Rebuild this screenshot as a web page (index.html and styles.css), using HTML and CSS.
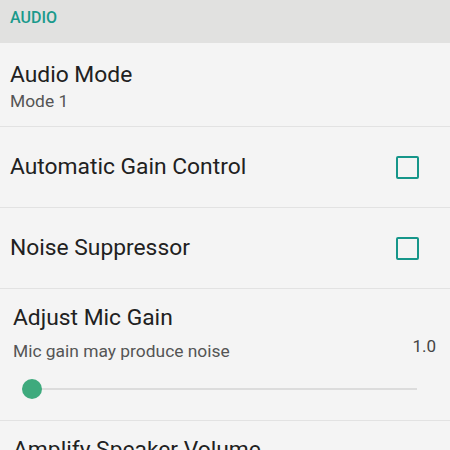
FILE: index.html
```html
<!DOCTYPE html>
<html lang="en">
<head>
    <meta charset="UTF-8">
    <meta name="viewport" content="width=device-width, initial-scale=1.0">
    <title>Audio Settings</title>
    <link rel="stylesheet" href="styles.css">
</head>
<body>

    <div class="category">AUDIO</div>

    <div class="pref pref-list">
        <div class="title">Audio Mode</div>
        <div class="summary">Mode 1</div>
    </div>

    <div class="pref pref-check">
        <div class="title">Automatic Gain Control</div>
        <span class="checkbox"></span>
    </div>

    <div class="pref pref-check">
        <div class="title">Noise Suppressor</div>
        <span class="checkbox"></span>
    </div>

    <div class="pref pref-seek">
        <div class="title">Adjust Mic Gain</div>
        <div class="seek-info">
            <div class="summary">Mic gain may produce noise</div>
            <div class="value">1.0</div>
        </div>
        <div class="slider">
            <div class="track"></div>
            <div class="thumb"></div>
        </div>
    </div>

    <div class="pref pref-seek">
        <div class="title">Amplify Speaker Volume</div>
    </div>

</body>
</html>
```

FILE: styles.css
```css
body {
    margin: 0;
    background-color: #f4f4f4;
    font-family: Roboto, "Noto Sans", sans-serif;
    color: #212121;
    overflow: hidden;
}
.category {
    height: 43px;
    box-sizing: border-box;
    padding: 9px 10px 0;
    background-color: #e1e1e0;
    color: #1a9a8c;
    font-size: 16px;
    font-weight: 500;
    line-height: 18px;
}
.pref {
    box-sizing: border-box;
    border-bottom: 1px solid #e2e2e2;
}
.title {
    font-size: 22.8px;
    line-height: 26px;
}
.summary {
    font-size: 17.4px;
    line-height: 20px;
    color: #555;
}
.pref-list {
    padding: 19px 10px 15px;
}
.pref-list .summary {
    margin-top: 3px;
}
.pref-check {
    height: 81px;
    display: flex;
    align-items: center;
    justify-content: space-between;
    padding: 0 31px 0 10px;
}
.checkbox {
    width: 19px;
    height: 19px;
    border: 2px solid #16968a;
    border-radius: 2px;
}
.pref-seek {
    padding: 16px 14px 21px 13px;
}
.seek-info {
    display: flex;
    justify-content: space-between;
    align-items: flex-start;
    margin-top: 10px;
}
.value {
    font-size: 17px;
    line-height: 20px;
    color: #444;
    margin-top: -5px;
}
.slider {
    position: relative;
    height: 20px;
    margin: 18px 19px 0 9px;
}
.track {
    position: absolute;
    left: 10px;
    right: 0;
    top: 9px;
    height: 2px;
    background-color: #dcdcdc;
}
.thumb {
    position: absolute;
    left: 0;
    top: 0;
    width: 20px;
    height: 20px;
    border-radius: 50%;
    background-color: #3eaa7d;
}
```
